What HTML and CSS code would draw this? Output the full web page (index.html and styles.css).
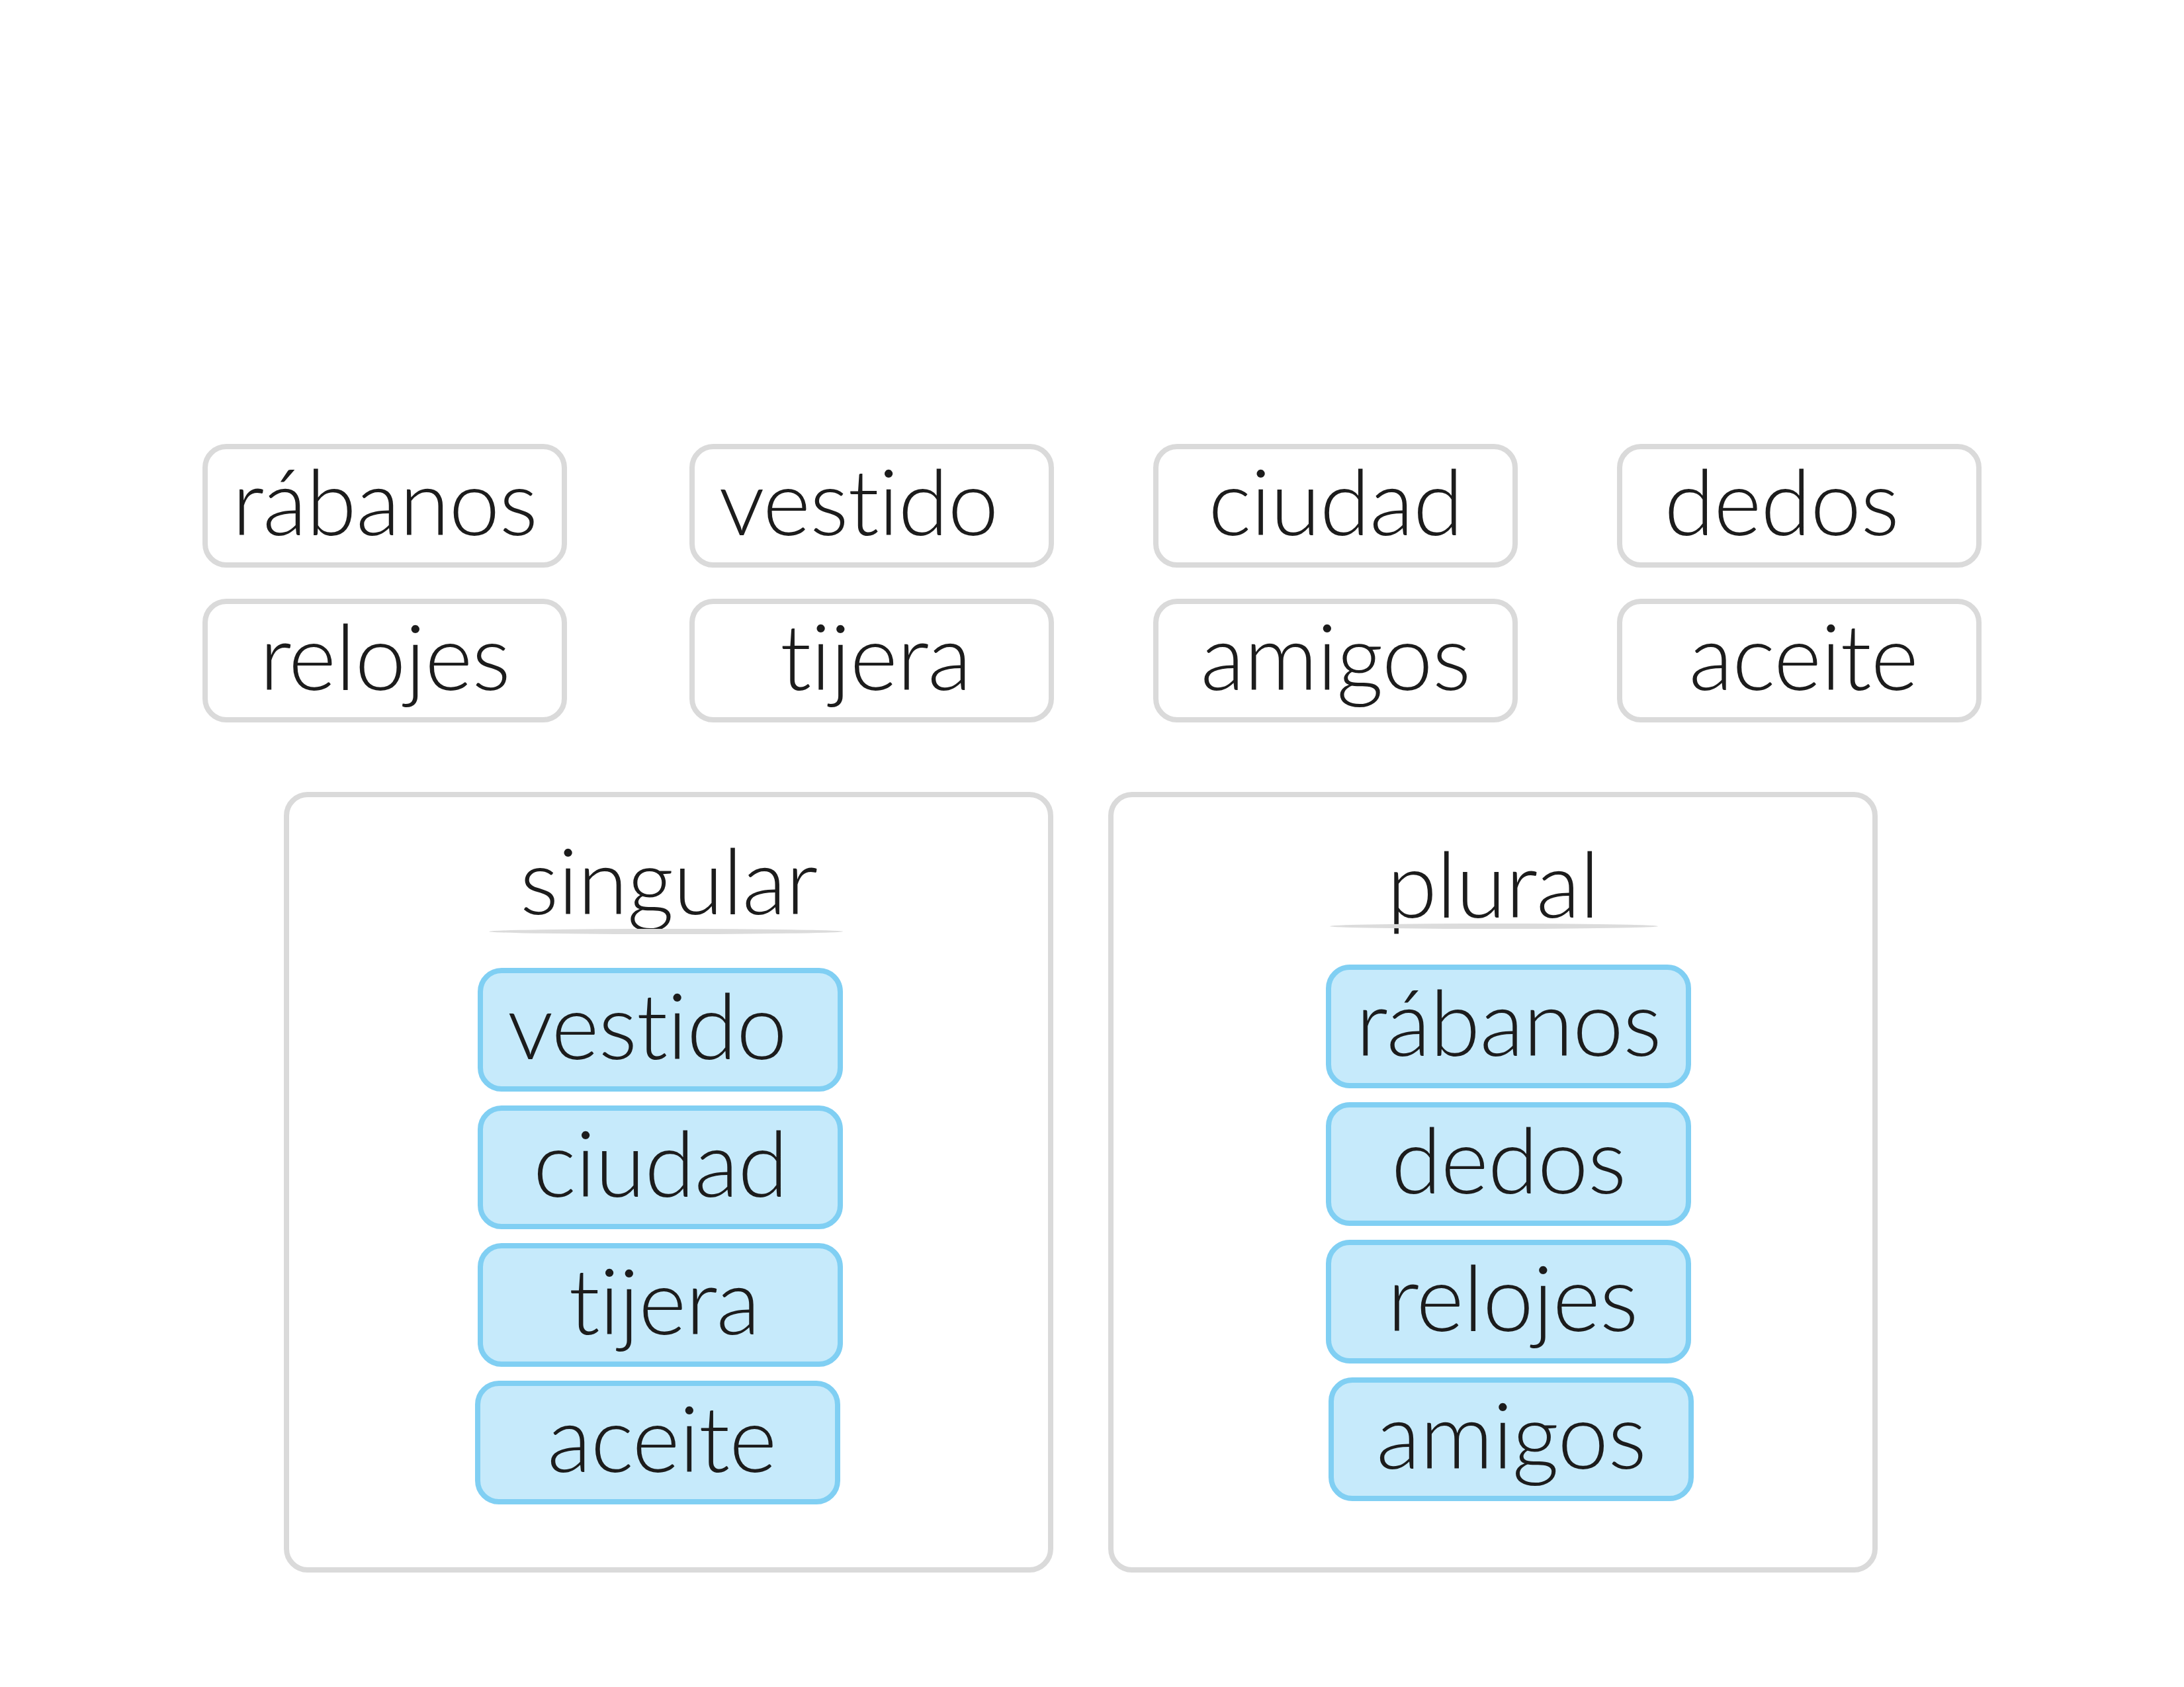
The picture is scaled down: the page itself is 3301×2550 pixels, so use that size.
FILE: index.html
```html
<!DOCTYPE html>
<html lang="es">
<head>
<meta charset="utf-8">
<title>singular / plural</title>
<link rel="stylesheet" href="styles.css">
</head>
<body>
<main class="page">
  <section class="bank">
    <div class="card">rábanos</div>
    <div class="card nudge-l">vestido</div>
    <div class="card">ciudad</div>
    <div class="card nudge-ll">dedos</div>
    <div class="card">relojes</div>
    <div class="card nudge-r">tijera</div>
    <div class="card">amigos</div>
    <div class="card nudge-r">aceite</div>
  </section>

  <section class="groups">
    <div class="group group-singular">
      <h2 class="group-title">singular</h2>
      <div class="rule"></div>
      <div class="items">
        <div class="card item nudge-l">vestido</div>
        <div class="card item">ciudad</div>
        <div class="card item nudge-r">tijera</div>
        <div class="card item shift-l nudge-r">aceite</div>
      </div>
    </div>
    <div class="group group-plural">
      <h2 class="group-title">plural</h2>
      <div class="rule"></div>
      <div class="items">
        <div class="card item">rábanos</div>
        <div class="card item">dedos</div>
        <div class="card item nudge-r">relojes</div>
        <div class="card item shift-r">amigos</div>
      </div>
    </div>
  </section>
</main>
</body>
</html>
```

FILE: styles.css
```css
html, body {
  margin: 0;
  padding: 0;
  background: #ffffff;
}

body {
  width: 3301px;
  height: 2550px;
  overflow: hidden;
  font-family: "Lato", "Liberation Sans", sans-serif;
  font-weight: 300;
  color: #1c1c1c;
}

.page {
  padding-top: 671px;
}

.bank {
  margin-left: 306px;
  display: grid;
  grid-template-columns: 586px 551px 551px 551px;
  grid-auto-rows: 187px;
  column-gap: 150px;
  row-gap: 47px;
}

.card {
  box-sizing: border-box;
  width: 551px;
  height: 187px;
  border: 8px solid #dadada;
  border-radius: 36px;
  background: #ffffff;
  font-size: 138px;
  letter-spacing: -1px;
  line-height: 153px;
  padding-bottom: 18px;
  text-align: center;
  white-space: nowrap;
}

.nudge-l { padding-right: 40px; }
.nudge-ll { padding-right: 54px; }
.nudge-r { padding-left: 12px; }

.groups {
  margin-top: 105px;
  margin-left: 429px;
  display: flex;
  gap: 83px;
}

.group {
  box-sizing: border-box;
  width: 1163px;
  height: 1180px;
  border: 8px solid #dadada;
  border-radius: 36px;
  display: flex;
  flex-direction: column;
}

.group-title {
  margin: 0;
  font-size: 138px;
  letter-spacing: -1px;
  font-weight: 300;
  line-height: 168px;
  text-align: center;
}

.rule {
  height: 8px;
  border-radius: 50%;
  background: #dcdcdc;
}

.items {
  display: flex;
  flex-direction: column;
  gap: 21px;
}

.item {
  width: 552px;
  background: #c6eafb;
  border-color: #80cff3;
}

.group-singular { padding-top: 40px; }
.group-singular .rule { margin-top: -9px; margin-left: 302px; width: 535px; }
.group-singular .items { margin-top: 51px; margin-left: 285px; }

.group-plural { padding-top: 45px; }
.group-plural .rule { margin-top: -22px; margin-left: 327px; width: 496px; }
.group-plural .items { margin-top: 54px; margin-left: 321px; }

.shift-l { margin-left: -4px; }
.shift-r { margin-left: 4px; }
```
